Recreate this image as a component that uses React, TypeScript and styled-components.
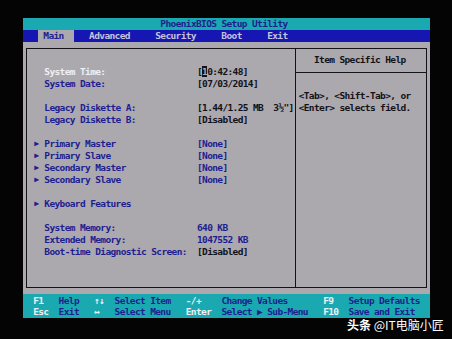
import styled, { createGlobalStyle } from 'styled-components';
import type { ReactNode } from 'react';

// one character cell of the 80x25 text screen
const CW = 407 / 80;
const RH = 12;
const c = (n: number) => `${(n * CW).toFixed(2)}px`;

const CYAN = '#1aa9b1';
const BLUE = '#1616b2';
const GREY = '#aba8ae';
const NAVY = '#1e1e8e';
const INK = '#121218';
const WHITE = '#f0f0f4';

const GlobalStyle = createGlobalStyle`
  html, body {
    margin: 0;
    background: #040404;
    overflow: hidden;
  }
`;

type Item = {
  label: string;
  value?: ReactNode;
  sub?: boolean;
  selected?: boolean;
  tone?: 'ink' | 'navy';
};

const keys = [
  ['F1', 'Help', '↑↓', 'Select Item', '-/+', 'Change Values', 'F9', 'Setup Defaults'],
  ['Esc', 'Exit', '↔', 'Select Menu', 'Enter', 'Select ▶ Sub-Menu', 'F10', 'Save and Exit'],
];

function settingGroups(): Item[][] {
  return [
    [
      {
        label: 'System Time:',
        selected: true,
        value: (
          <>
            [<Cursor>1</Cursor>0:42:48]
          </>
        ),
      },
      { label: 'System Date:', value: '[07/03/2014]' },
    ],
    [
      { label: 'Legacy Diskette A:', value: '[1.44/1.25 MB  3½"]' },
      { label: 'Legacy Diskette B:', value: '[Disabled]' },
    ],
    [
      { label: 'Primary Master', sub: true, value: '[None]', tone: 'navy' },
      { label: 'Primary Slave', sub: true, value: '[None]', tone: 'navy' },
      { label: 'Secondary Master', sub: true, value: '[None]', tone: 'navy' },
      { label: 'Secondary Slave', sub: true, value: '[None]', tone: 'navy' },
    ],
    [{ label: 'Keyboard Features', sub: true }],
    [
      { label: 'System Memory:', value: '640 KB', tone: 'navy' },
      { label: 'Extended Memory:', value: '1047552 KB', tone: 'navy' },
      { label: 'Boot-time Diagnostic Screen:', value: '[Disabled]' },
    ],
  ];
}

export default function App() {
  const groups = settingGroups();
  return (
    <Page>
      <GlobalStyle />
      <Screen>
        <TitleBar>PhoenixBIOS Setup Utility</TitleBar>
        <MenuBar>
          <Tab $cols={7} $active>Main</Tab>
          <Tab $cols={13} $skip={2}>Advanced</Tab>
          <Tab $cols={13}>Security</Tab>
          <Tab $cols={9}>Boot</Tab>
          <Tab $cols={6}>Exit</Tab>
        </MenuBar>

        <Body>
          <Frame>
            <Settings>
              {groups.map((g, gi) => (
                <Group key={gi}>
                  {g.map((it) => (
                    <Row key={it.label}>
                      <span />
                      <Marker>{it.sub ? '▶' : ''}</Marker>
                      <Label $selected={it.selected}>{it.label}</Label>
                      <Value $tone={it.tone}>{it.value}</Value>
                    </Row>
                  ))}
                </Group>
              ))}
            </Settings>
            <Help>
              <HelpTitle>Item Specific Help</HelpTitle>
              <HelpText>
                <div>&lt;Tab&gt;, &lt;Shift-Tab&gt;, or</div>
                <div>&lt;Enter&gt; selects field.</div>
              </HelpText>
            </Help>
          </Frame>
        </Body>

        <KeyBar>
          {keys.map((row, ri) => (
            <KeyRow key={ri}>
              <span />
              {row.map((t, i) => (
                <KeyText key={i} $key={i % 2 === 0}>
                  {t}
                </KeyText>
              ))}
            </KeyRow>
          ))}
        </KeyBar>
      </Screen>
      <Watermark>
        <b>头条</b> @IT电脑小匠
      </Watermark>
    </Page>
  );
}

const Page = styled.div`
  position: relative;
  width: 452px;
  height: 339px;
  box-sizing: border-box;
  padding: 18px 0 0 23px;
`;

const Screen = styled.div`
  width: 407px;
  display: flex;
  flex-direction: column;
  font-family: 'DejaVu Sans Mono', 'Liberation Mono', monospace;
  font-weight: bold;
  font-size: 9.5px;
  letter-spacing: -0.63px;
  line-height: ${RH}px;
  white-space: pre;
`;

const TitleBar = styled.div`
  height: ${RH}px;
  background: ${CYAN};
  color: ${NAVY};
  padding-left: ${c(27)};
`;

const MenuBar = styled.div`
  height: ${RH}px;
  background: ${BLUE};
  display: flex;
  padding-left: ${c(3)};
`;

const Tab = styled.div<{ $cols: number; $active?: boolean; $skip?: number }>`
  width: ${(p) => c(p.$cols)};
  margin-left: ${(p) => c(p.$skip ?? 0)};
  padding-left: ${c(1)};
  box-sizing: border-box;
  background: ${(p) => (p.$active ? GREY : 'transparent')};
  color: ${(p) => (p.$active ? NAVY : '#c4c4dc')};
`;

const Body = styled.div`
  height: ${RH * 21}px;
  background: ${GREY};
  box-sizing: border-box;
  padding: ${RH / 2}px ${c(0.5)};
`;

const Frame = styled.div`
  height: ${RH * 20}px;
  box-sizing: border-box;
  border: 1px solid ${INK};
  display: grid;
  grid-template-columns: ${c(53)} 1fr;
`;

const Settings = styled.div`
  border-right: 1px solid ${INK};
  padding-top: ${RH / 2 - 1}px;
`;

const Group = styled.div`
  padding-top: ${RH}px;
`;

const Row = styled.div`
  display: grid;
  grid-template-columns: ${c(1.5)} ${c(2)} ${c(30)} auto;
  height: ${RH}px;
`;

const Marker = styled.span`
  color: ${NAVY};
  font-size: 8px;
  letter-spacing: 0;
`;

const Label = styled.span<{ $selected?: boolean }>`
  color: ${(p) => (p.$selected ? WHITE : NAVY)};
`;

const Value = styled.span<{ $tone?: 'ink' | 'navy' }>`
  color: ${(p) => (p.$tone === 'navy' ? NAVY : INK)};
`;

const Cursor = styled.span`
  background: ${INK};
  color: ${GREY};
`;

const Help = styled.div`
  display: flex;
  flex-direction: column;
`;

const HelpTitle = styled.div`
  color: ${INK};
  padding: ${RH / 2 - 1}px 0 ${RH / 2}px ${c(3.5)};
  border-bottom: 1px solid ${INK};
`;

const HelpText = styled.div`
  color: ${INK};
  padding: ${RH * 1.5 - 1}px 0 0 ${c(0.5)};
`;

const KeyBar = styled.div`
  background: ${CYAN};
  height: ${RH * 2}px;
  padding-top: 1px;
  box-sizing: border-box;
`;

const KeyRow = styled.div`
  display: grid;
  grid-template-columns: ${c(2)} ${c(5)} ${c(7)} ${c(4)} ${c(14)} ${c(7)} ${c(20)} ${c(5)} 1fr;
  height: ${RH - 1}px;
`;

const KeyText = styled.span<{ $key: boolean }>`
  color: ${(p) => (p.$key ? WHITE : NAVY)};
`;

const Watermark = styled.div`
  position: absolute;
  left: 347px;
  top: 316px;
  font-family: 'Noto Sans CJK SC', sans-serif;
  font-size: 12px;
  color: #ffffff;
  text-shadow: 0 0 2px rgba(0, 0, 0, 0.6);
  white-space: nowrap;
  b {
    font-weight: bold;
  }
`;
